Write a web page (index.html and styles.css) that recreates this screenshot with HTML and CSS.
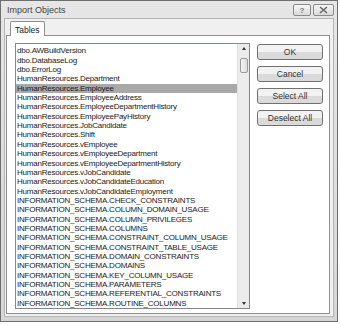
FILE: index.html
```html
<!DOCTYPE html>
<html lang="en">
<head>
  <meta charset="UTF-8">
  <title>Import Objects</title>
  <link rel="stylesheet" href="styles.css">
</head>
<body>
  <div class="window">
    <div class="titlebar">
      <span class="title">Import Objects</span>
      <div class="caption-buttons">
        <span class="cap-btn help">?</span>
        <span class="cap-btn close">
          <svg width="9" height="8" viewBox="0 0 9 8"><path d="M1 1 L8 7 M8 1 L1 7" stroke="#666" stroke-width="1.5" fill="none"/></svg>
        </span>
      </div>
    </div>

    <div class="client">
      <div class="tabs">
        <span class="tab active">Tables</span>
      </div>
      <div class="panel">
        <div class="listbox">
          <ul class="items">
            <li>dbo.AWBuildVersion</li>
            <li>dbo.DatabaseLog</li>
            <li>dbo.ErrorLog</li>
            <li>HumanResources.Department</li>
            <li class="selected">HumanResources.Employee</li>
            <li>HumanResources.EmployeeAddress</li>
            <li>HumanResources.EmployeeDepartmentHistory</li>
            <li>HumanResources.EmployeePayHistory</li>
            <li>HumanResources.JobCandidate</li>
            <li>HumanResources.Shift</li>
            <li>HumanResources.vEmployee</li>
            <li>HumanResources.vEmployeeDepartment</li>
            <li>HumanResources.vEmployeeDepartmentHistory</li>
            <li>HumanResources.vJobCandidate</li>
            <li>HumanResources.vJobCandidateEducation</li>
            <li>HumanResources.vJobCandidateEmployment</li>
            <li>INFORMATION_SCHEMA.CHECK_CONSTRAINTS</li>
            <li>INFORMATION_SCHEMA.COLUMN_DOMAIN_USAGE</li>
            <li>INFORMATION_SCHEMA.COLUMN_PRIVILEGES</li>
            <li>INFORMATION_SCHEMA.COLUMNS</li>
            <li>INFORMATION_SCHEMA.CONSTRAINT_COLUMN_USAGE</li>
            <li>INFORMATION_SCHEMA.CONSTRAINT_TABLE_USAGE</li>
            <li>INFORMATION_SCHEMA.DOMAIN_CONSTRAINTS</li>
            <li>INFORMATION_SCHEMA.DOMAINS</li>
            <li>INFORMATION_SCHEMA.KEY_COLUMN_USAGE</li>
            <li>INFORMATION_SCHEMA.PARAMETERS</li>
            <li>INFORMATION_SCHEMA.REFERENTIAL_CONSTRAINTS</li>
            <li>INFORMATION_SCHEMA.ROUTINE_COLUMNS</li>
          </ul>
          <div class="scrollbar">
            <span class="arrow up"></span>
            <div class="track"><span class="thumb"></span></div>
            <span class="arrow down"></span>
          </div>
        </div>
        <div class="actions">
          <button>OK</button>
          <button>Cancel</button>
          <button>Select All</button>
          <button>Deselect All</button>
        </div>
      </div>
    </div>
  </div>
</body>
</html>
```

FILE: styles.css
```css
body {
  margin: 0;
  background: #fff;
  font-family: 'Liberation Sans', Arial, sans-serif;
  color: #222;
}
.window {
  width: 338px;
  height: 322px;
  border: 1px solid #6e6e6e;
  background: linear-gradient(#e6e6e6, #d6d6d6);
  display: flex;
  flex-direction: column;
  box-sizing: border-box;
}
.titlebar {
  height: 20px;
  display: flex;
  align-items: center;
  justify-content: space-between;
  padding: 0 3px 0 6px;
}
.title {
  font-size: 9px;
  color: #444;
}
.caption-buttons {
  display: flex;
  gap: 2px;
  align-self: flex-start;
  margin-top: 3px;
}
.cap-btn {
  display: flex;
  align-items: center;
  justify-content: center;
  height: 10px;
  border: 1px solid #8a8a8a;
  border-radius: 2px;
  background: linear-gradient(#f6f6f6, #dadada);
  font-size: 8px;
  font-weight: bold;
  color: #777;
}
.cap-btn.help {
  width: 16px;
}
.cap-btn.close {
  width: 19px;
}
.client {
  flex: 1;
  margin: 0 3px 4px;
  background: #f0f0f0;
  border: 1px solid #b4b4b4;
  padding: 1px 3px 2px 1px;
  display: flex;
  flex-direction: column;
}
.tabs {
  display: flex;
  padding-left: 4px;
  height: 15px;
}
.tab {
  font-size: 8.5px;
  padding: 3px 4px 0;
  border: 1px solid #8e8f8f;
  border-bottom: none;
  background: #fff;
  position: relative;
  top: 1px;
  border-radius: 2px 2px 0 0;
}
.panel {
  flex: 1;
  background: #fff;
  border: 1px solid #8e8f8f;
  display: flex;
  padding: 7px 6px 4px 8px;
  gap: 7px;
}
.listbox {
  width: 236px;
  border: 1px solid #828790;
  display: flex;
}
.items {
  list-style: none;
  margin: 0;
  padding: 2px 0 0;
  flex: 1;
  overflow: hidden;
}
.items li {
  font-size: 8px;
  letter-spacing: -0.22px;
  height: 9.35px;
  line-height: 9.35px;
  padding-left: 1px;
  white-space: nowrap;
  color: #1a1a1a;
}
.items li.selected {
  background: #a9a9a9;
}
.scrollbar {
  width: 11px;
  background: #ececec;
  border-left: 1px solid #e0e0e0;
  display: flex;
  flex-direction: column;
  align-items: center;
}
.arrow {
  height: 9px;
  width: 100%;
  display: flex;
  align-items: center;
  justify-content: center;
}
.arrow::before {
  content: "";
  border-left: 2.5px solid transparent;
  border-right: 2.5px solid transparent;
}
.arrow.up::before {
  border-bottom: 3px solid #333;
}
.arrow.down::before {
  border-top: 3px solid #333;
}
.track {
  flex: 1;
  width: 100%;
  padding-top: 5px;
}
.thumb {
  display: block;
  width: 8px;
  height: 15px;
  margin: 0 auto;
  border: 1px solid #9a9a9a;
  border-radius: 2px;
  box-sizing: border-box;
  background: linear-gradient(90deg, #f4f4f4, #dcdcdc);
}
.actions {
  display: flex;
  flex-direction: column;
  gap: 6px;
  padding-top: 1px;
}
button {
  width: 66px;
  height: 16px;
  font-family: 'Liberation Sans', Arial, sans-serif;
  font-size: 8.5px;
  color: #333;
  border: 1px solid #707070;
  border-radius: 3px;
  background: linear-gradient(#f2f2f2 50%, #dadada 50%);
  padding: 0;
}
```
